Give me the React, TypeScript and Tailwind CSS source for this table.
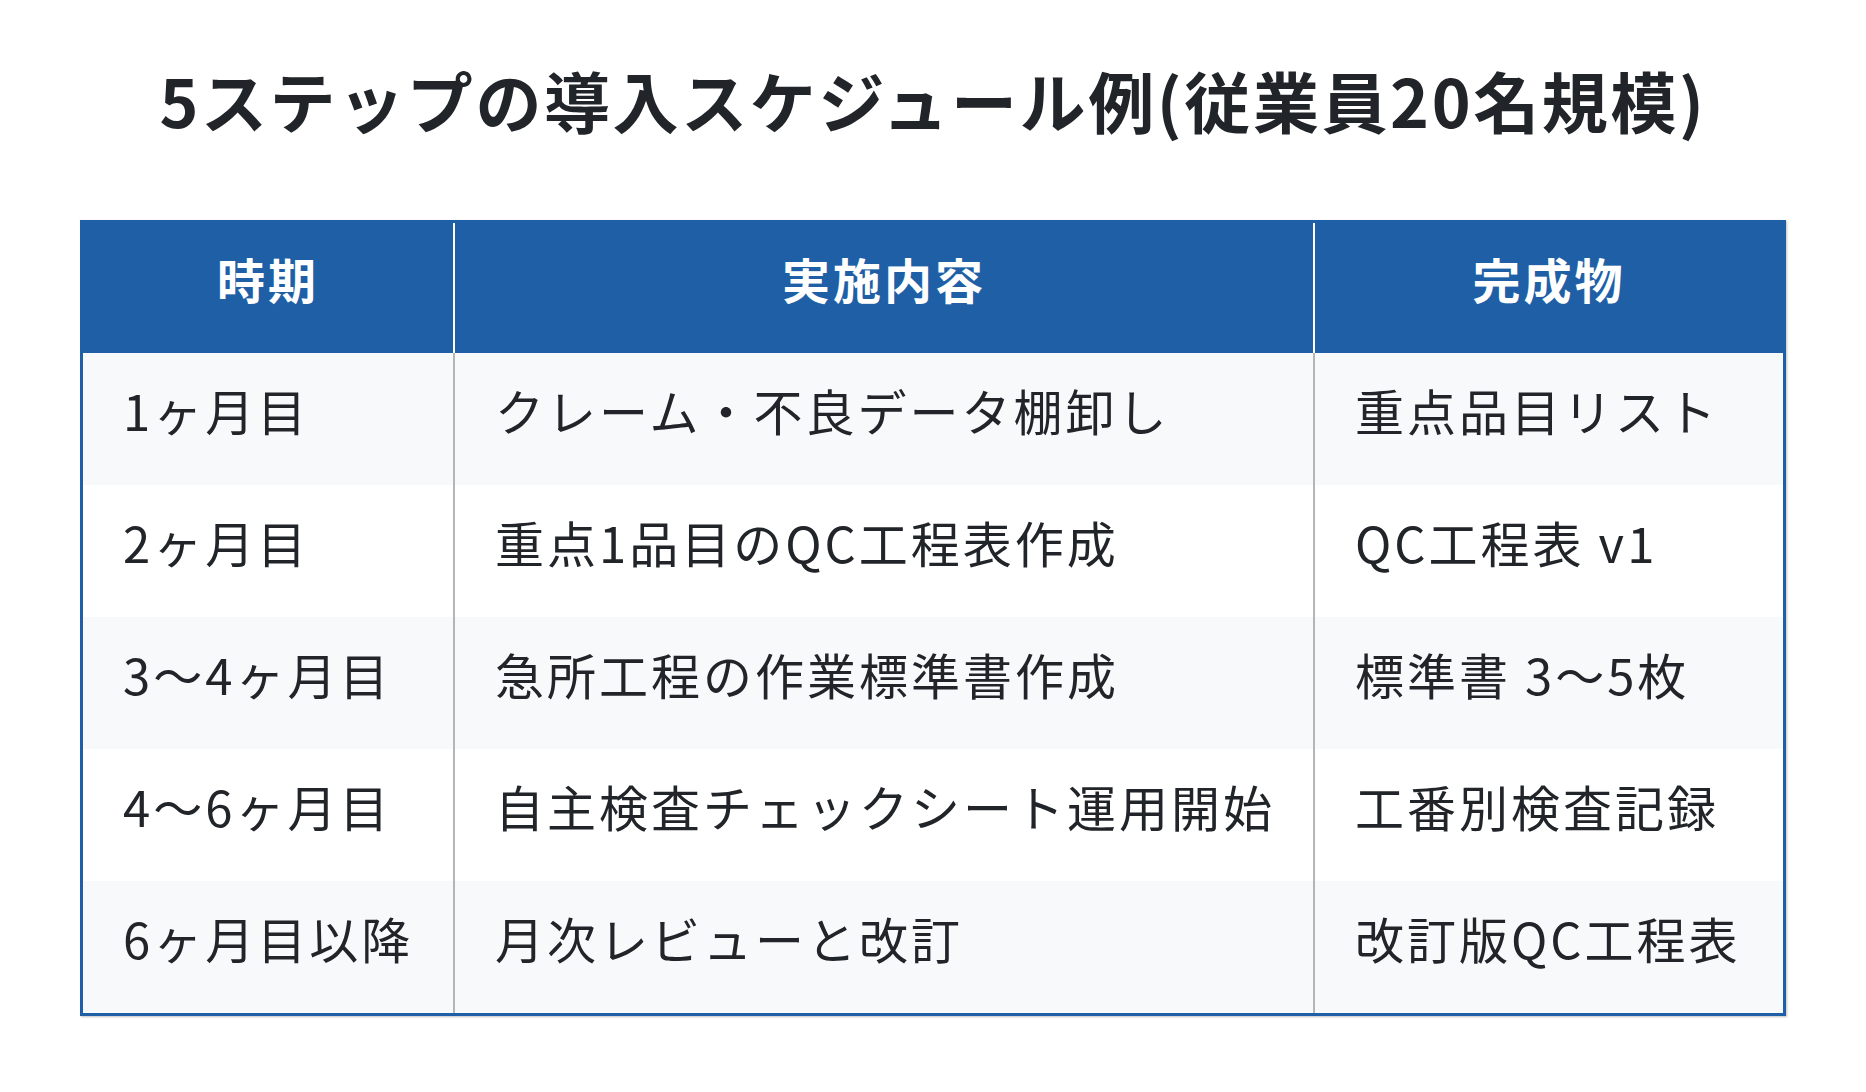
const rows = [
  ["1ヶ月目", "クレーム・不良データ棚卸し", "重点品目リスト"],
  ["2ヶ月目", "重点1品目のQC工程表作成", "QC工程表 v1"],
  ["3〜4ヶ月目", "急所工程の作業標準書作成", "標準書 3〜5枚"],
  ["4〜6ヶ月目", "自主検査チェックシート運用開始", "工番別検査記録"],
  ["6ヶ月目以降", "月次レビューと改訂", "改訂版QC工程表"],
];

const font = { fontFamily: '"Noto Sans CJK JP", "Noto Sans", sans-serif' };

export default function App() {
  return (
    <div className="min-h-[1092px] w-[1866px] bg-white text-[#212529]" style={font}>
      <h1 className="flex h-[220px] items-center justify-center pb-[22px] text-[66px] font-bold tracking-[2.6px]">
        5ステップの導入スケジュール例(従業員20名規模)
      </h1>

      <div className="mx-[80px] border-[3px] border-[#1f5fa6] shadow-[1px_1px_2px_rgba(0,0,0,0.25)]">
        <div className="grid h-[130px] grid-cols-[372px_860px_1fr] bg-[#1f5fa6] text-[48px] font-bold tracking-[3px] text-white">
          <div className="flex items-center justify-center border-r-2 border-white pb-[20px]">時期</div>
          <div className="flex items-center justify-center border-r-2 border-white pb-[20px]">実施内容</div>
          <div className="flex items-center justify-center pb-[20px]">完成物</div>
        </div>

        {rows.map((r, i) => (
          <div
            key={i}
            className={`grid h-[132px] grid-cols-[372px_860px_1fr] text-[49px] tracking-[3px] ${
              i % 2 === 0 ? "bg-[#f8f9fa]" : "bg-white"
            }`}
          >
            <div className="flex items-center border-r-2 border-[#b5b5b5] pb-[18px] pl-[40px]">{r[0]}</div>
            <div className="flex items-center border-r-2 border-[#b5b5b5] pb-[18px] pl-[40px]">{r[1]}</div>
            <div className="flex items-center pb-[18px] pl-[40px]">{r[2]}</div>
          </div>
        ))}
      </div>
    </div>
  );
}
